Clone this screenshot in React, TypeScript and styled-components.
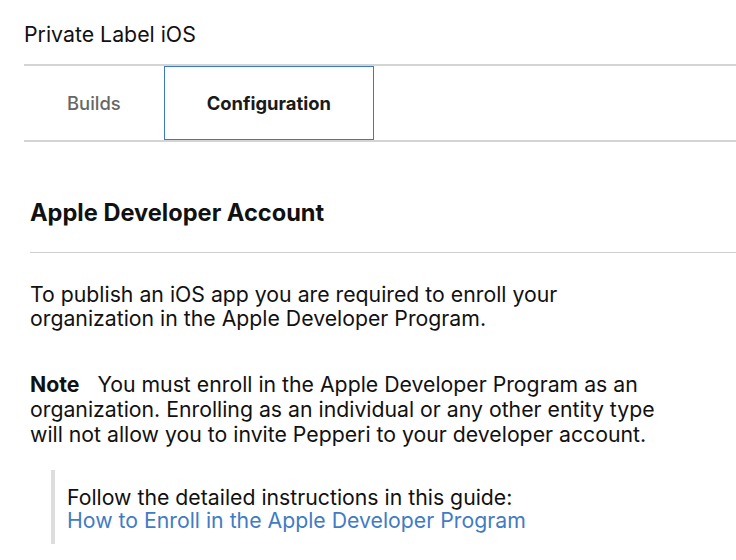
import styled, { createGlobalStyle } from "styled-components";

const GlobalStyle = createGlobalStyle`
  html, body {
    margin: 0;
    padding: 0;
    background: #ffffff;
  }
  body {
    font-family: Inter, "Noto Sans", "Liberation Sans", sans-serif;
    color: #111111;
  }
`;

const App = () => {
  return (
    <Page>
      <GlobalStyle />
      <PageTitle>Private Label iOS</PageTitle>
      <TabBar>
        <Tab>Builds</Tab>
        <Tab active>Configuration</Tab>
      </TabBar>
      <Section>
        <SectionTitle>Apple Developer Account</SectionTitle>
        <Paragraph>
          To publish an iOS app you are required to enroll your
          <br />
          organization in the Apple Developer Program.
        </Paragraph>
        <NoteParagraph>
          <strong>Note</strong>&nbsp;&nbsp; You must enroll in the Apple Developer Program as an
          <br />
          organization. Enrolling as an individual or any other entity type
          <br />
          will not allow you to invite Pepperi to your developer account.
        </NoteParagraph>
        <Quote>
          Follow the detailed instructions in this guide:
          <br />
          <GuideLink href="#">How to Enroll in the Apple Developer Program</GuideLink>
        </Quote>
      </Section>
    </Page>
  );
};

const Page = styled.div`
  padding: 22px 0 0 24px;
  overflow: hidden;
  height: 560px;
  box-sizing: border-box;
`;

const PageTitle = styled.h1`
  margin: 0 0 18px 0;
  font-size: 21.3px;
  font-weight: 400;
  line-height: 24px;
  color: #111;
`;

const TabBar = styled.div`
  display: flex;
  border-top: 2px solid #d4d4d4;
  border-bottom: 2px solid #d4d4d4;
  height: 74px;
`;

const Tab = styled.div<{ active?: boolean }>`
  display: flex;
  align-items: center;
  justify-content: center;
  padding: 0 42px;
  font-size: 18.4px;
  font-weight: ${(p) => (p.active ? 700 : 500)};
  color: ${(p) => (p.active ? "#1a1a1a" : "#666666")};
  border: 1px solid ${(p) => (p.active ? "#3a78c8" : "transparent")};
  box-sizing: border-box;
`;

const Section = styled.div`
  padding: 57px 0 0 6px;
`;

const SectionTitle = styled.h2`
  margin: 0;
  padding-bottom: 25px;
  font-size: 23.6px;
  font-weight: 700;
  line-height: 28px;
  border-bottom: 1px solid #cfcfcf;
`;

const Paragraph = styled.p`
  margin: 29px 0 0 0;
  font-size: 21.25px;
  line-height: 24px;
  color: #111;
`;

const NoteParagraph = styled(Paragraph)`
  margin-top: 42px;
  line-height: 25px;

  strong {
    font-weight: 700;
  }
`;

const Quote = styled.blockquote`
  margin: 23px 0 0 21px;
  padding: 16px 0 12px 12px;
  border-left: 4px solid #dddddd;
  font-size: 21.25px;
  line-height: 23px;
  color: #111;
`;

const GuideLink = styled.a`
  color: #3f7cc4;
  text-decoration: none;
`;

export default App;
